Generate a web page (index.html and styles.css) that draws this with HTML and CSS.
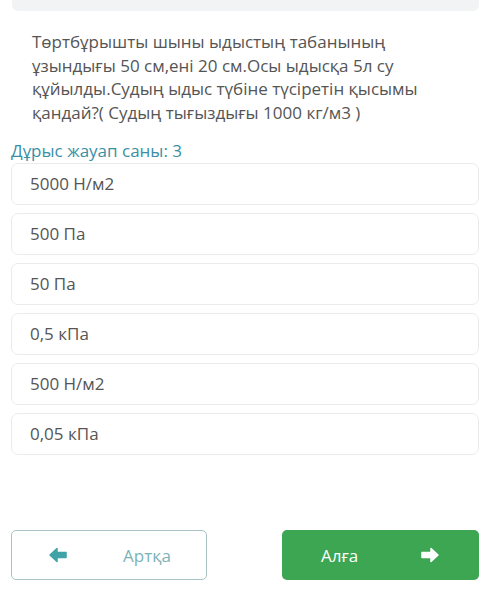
FILE: index.html
```html
<!DOCTYPE html>
<html lang="kk">
<head>
<meta charset="utf-8">
<link rel="stylesheet" href="styles.css">
</head>
<body>
<div class="page">
  <div class="topbar"></div>
  <div class="question">Төртбұрышты шыны ыдыстың табанының<br>ұзындығы 50 см,ені 20 см.Осы ыдысқа 5л су<br>құйылды.Судың ыдыс түбіне түсіретін қысымы<br>қандай?( Судың тығыздығы 1000 кг/м3 )</div>
  <div class="count">Дұрыс жауап саны: 3</div>
  <div class="options">
    <div class="option">5000 Н/м2</div>
    <div class="option">500 Па</div>
    <div class="option">50 Па</div>
    <div class="option">0,5 кПа</div>
    <div class="option">500 Н/м2</div>
    <div class="option">0,05 кПа</div>
  </div>
  <div class="nav">
    <div class="btn btn-back">
      <svg class="arrow" width="18" height="16" viewBox="0 0 18 16"><path d="M1 8 L8 1.5 L8 5.5 L17 5.5 L17 10.5 L8 10.5 L8 14.5 Z" fill="#3fa3a8" stroke="#3fa3a8" stroke-width="1.5" stroke-linejoin="round"/></svg>
      <span class="btn-label">Артқа</span>
    </div>
    <div class="btn btn-next">
      <span class="btn-label">Алға</span>
      <svg class="arrow" width="18" height="16" viewBox="0 0 18 16"><path d="M17 8 L10 1.5 L10 5.5 L1 5.5 L1 10.5 L10 10.5 L10 14.5 Z" fill="#ffffff" stroke="#ffffff" stroke-width="1.5" stroke-linejoin="round"/></svg>
    </div>
  </div>
</div>
</body>
</html>
```
FILE: styles.css
```css
html, body {
  margin: 0;
  padding: 0;
  background: #ffffff;
}
.page {
  width: 500px;
  height: 609px;
  font-family: "Open Sans", "Noto Sans", sans-serif;
  color: #555555;
}
.topbar {
  margin: 0 21px 0 12px;
  height: 11px;
  background: #f2f3f4;
  border-radius: 0 0 6px 6px;
}
.question {
  margin: 19px 0 0 32px;
  font-size: 17px;
  line-height: 23.5px;
  color: #555555;
}
.count {
  margin: 16px 0 0 11px;
  font-size: 17px;
  line-height: 22px;
  color: #3a8fa6;
}
.options {
  margin: 1px 21px 0 11px;
  display: flex;
  flex-direction: column;
  gap: 8px;
}
.option {
  height: 42px;
  box-sizing: border-box;
  border: 1px solid #ebebeb;
  border-radius: 7px;
  padding: 0 0 2px 18px;
  display: flex;
  align-items: center;
  font-size: 17px;
  color: #555555;
}
.nav {
  margin: 75px 21px 0 11px;
  display: flex;
  justify-content: space-between;
}
.btn {
  width: 196px;
  height: 50px;
  box-sizing: border-box;
  border-radius: 5px;
  display: flex;
  align-items: center;
  font-size: 17px;
}
.btn-back {
  border: 1px solid #a9c2c6;
  color: #7cb3b7;
  padding-left: 37px;
}
.btn-back .btn-label {
  margin-left: 56px;
}
.btn-next {
  width: 197px;
  background: #3ca653;
  color: #ffffff;
  padding-left: 39px;
}
.btn-next .btn-label {
  margin-right: 63px;
}
.arrow {
  display: block;
}
```
